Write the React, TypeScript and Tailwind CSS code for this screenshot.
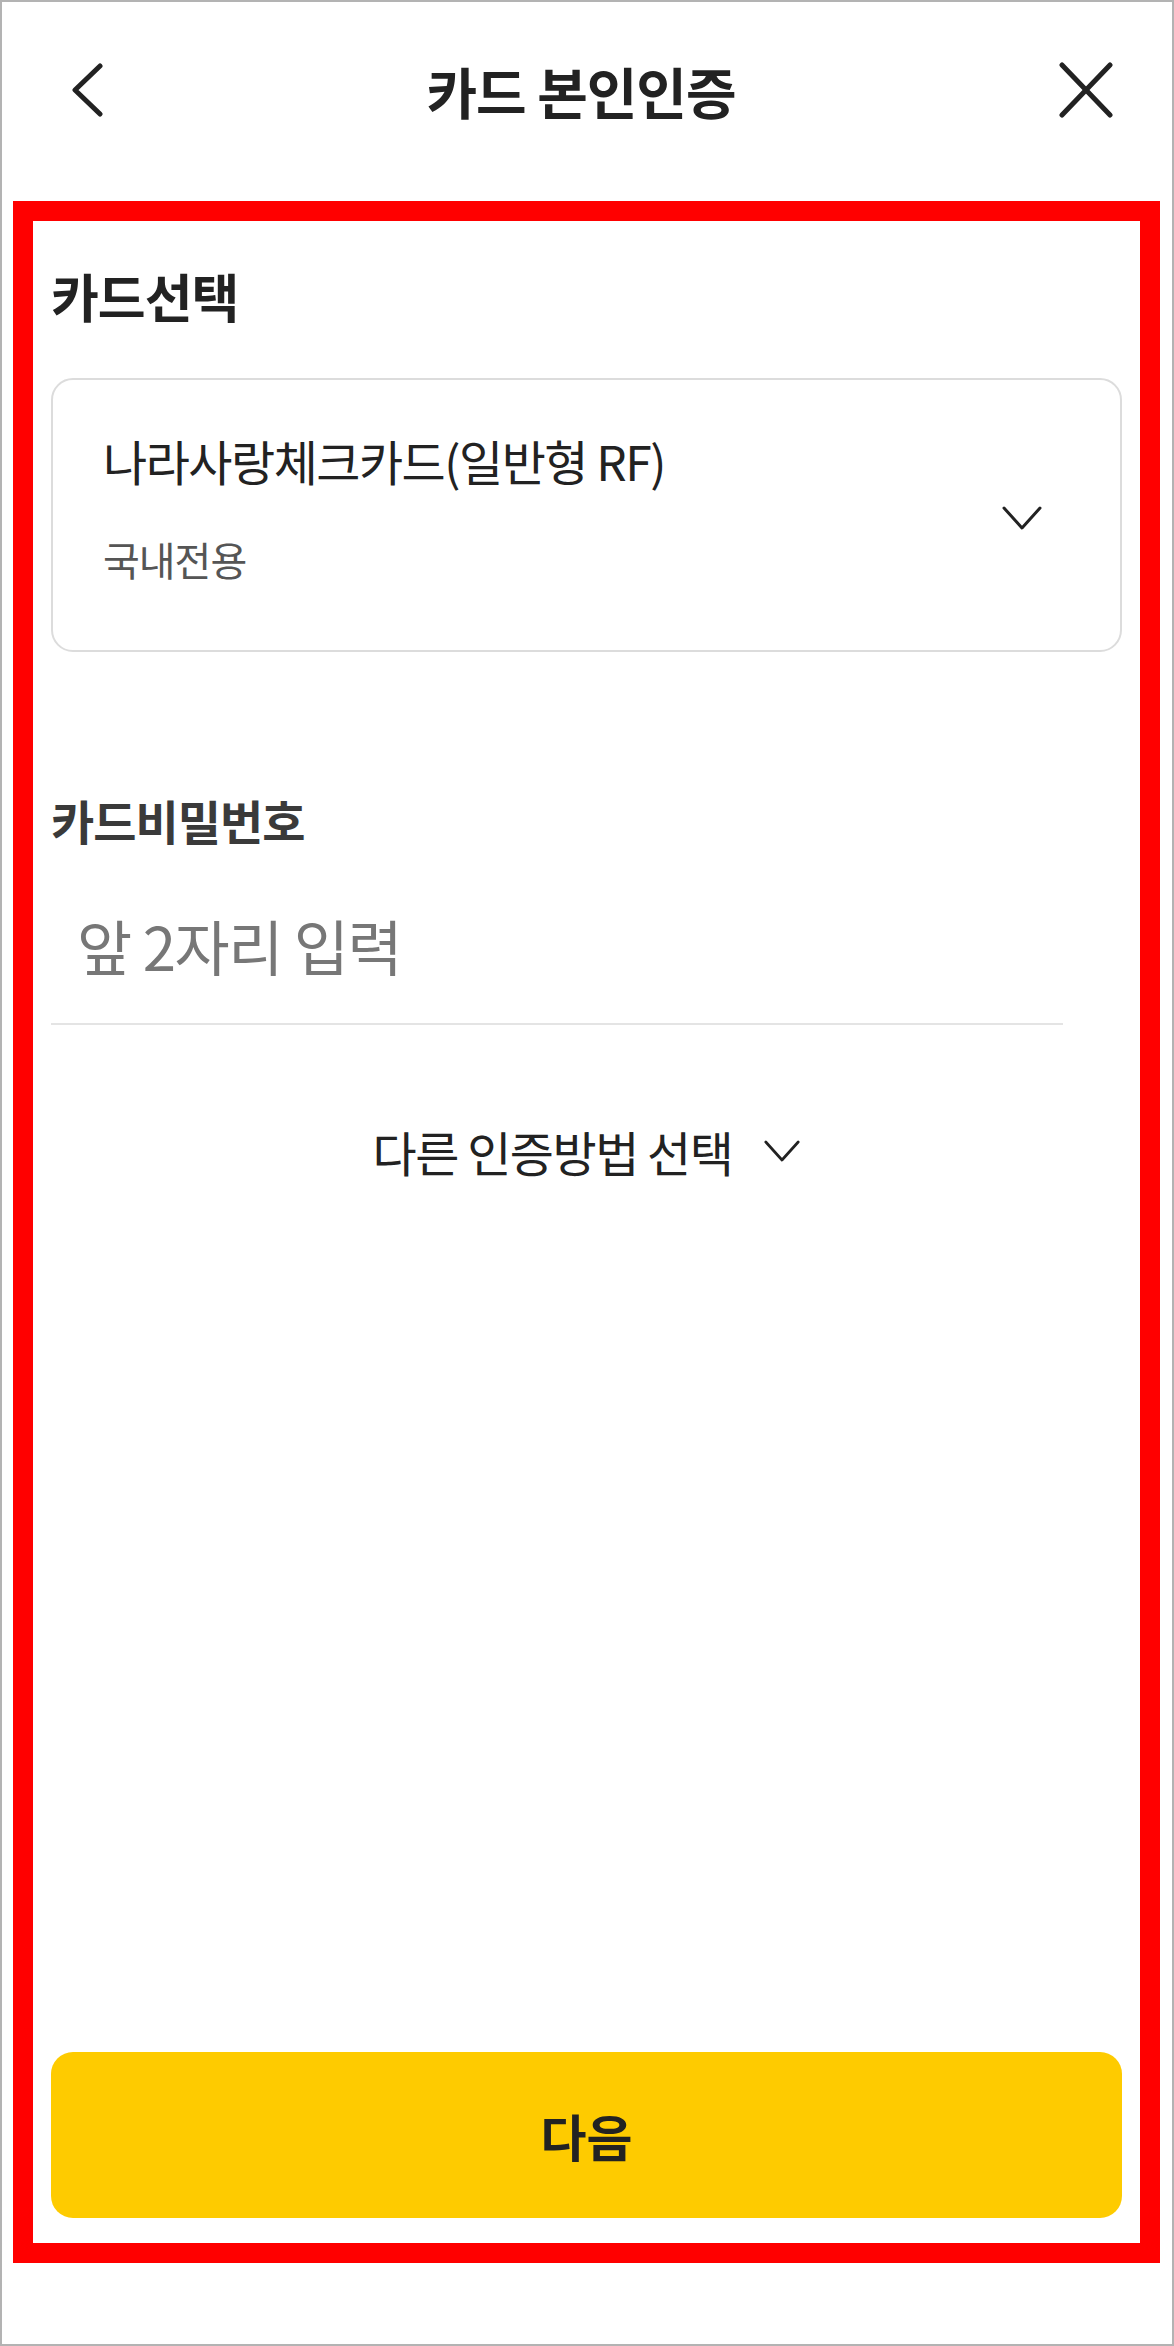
import React from "react";

const font = { fontFamily: '"Noto Sans CJK KR", "Noto Sans", sans-serif' };

function Chevron({ className = "" }: { className?: string }) {
  return (
    <svg viewBox="0 0 40 24" className={className} fill="none" stroke="#222" strokeWidth="3" strokeLinecap="round" strokeLinejoin="round">
      <polyline points="2,2 20,22 38,2" />
    </svg>
  );
}

export default function App() {
  return (
    <div
      className="w-[1174px] h-[2346px] bg-white border-2 border-[#b3b3b3] flex flex-col text-[#222]"
      style={font}
    >
      {/* header */}
      <header className="h-[176px] shrink-0 flex items-center justify-between pl-[68px] pr-[58px]">
        <button className="w-[34px] h-[54px]">
          <svg viewBox="0 0 34 54" className="w-[34px] h-[54px]" fill="none" stroke="#222" strokeWidth="5" strokeLinecap="round" strokeLinejoin="round">
            <polyline points="30,3 5,27 30,51" />
          </svg>
        </button>
        <h1 className="text-[55px] font-bold tracking-[-1px] leading-none">카드 본인인증</h1>
        <button className="w-[56px] h-[56px]">
          <svg viewBox="0 0 56 56" className="w-[56px] h-[56px]" fill="none" stroke="#222" strokeWidth="5" strokeLinecap="round">
            <line x1="4" y1="3" x2="52" y2="53" />
            <line x1="52" y1="3" x2="4" y2="53" />
          </svg>
        </button>
      </header>

      {/* content */}
      <main className="flex-1 mt-[23px] mb-[81px] ml-[11px] mr-[12px] border-[20px] border-[#ff0000] flex flex-col px-[18px] pt-[42px] pb-[25px]">
        <h2 className="text-[52px] font-bold leading-[66px] tracking-[-1px]">카드선택</h2>

        <div className="mt-[49px] h-[274px] rounded-[22px] border-2 border-[#dcdcdc] flex items-start justify-between pl-[50px] pr-[78px] pt-[50px]">
          <div className="flex flex-col">
            <span className="text-[48px] leading-[60px] tracking-[-1.5px]">나라사랑체크카드(일반형 RF)</span>
            <span className="mt-[44px] text-[40px] leading-[50px] text-[#555] tracking-[-1px]">국내전용</span>
          </div>
          <Chevron className="w-[40px] h-[24px] mt-[76px]" />
        </div>

        <h3 className="mt-[138px] text-[47px] font-bold leading-[60px] text-[#3a3a3a] tracking-[-1px]">카드비밀번호</h3>

        <div className="mt-[57px] w-[1012px] border-b-2 border-[#e4e4e4] pb-[40px] pl-[26px]">
          <span className="text-[60px] leading-[76px] text-[#777] tracking-[-1.5px]">앞 2자리 입력</span>
        </div>

        <button className="mt-[96px] self-center flex items-center gap-[32px] text-[48px] leading-[60px] tracking-[-1.5px]">
          다른 인증방법 선택
          <Chevron className="w-[36px] h-[22px]" />
        </button>

        <button className="mt-auto h-[166px] rounded-[22px] bg-[#fecb00] text-[50px] font-bold text-[#222]">
          다음
        </button>
      </main>
    </div>
  );
}
